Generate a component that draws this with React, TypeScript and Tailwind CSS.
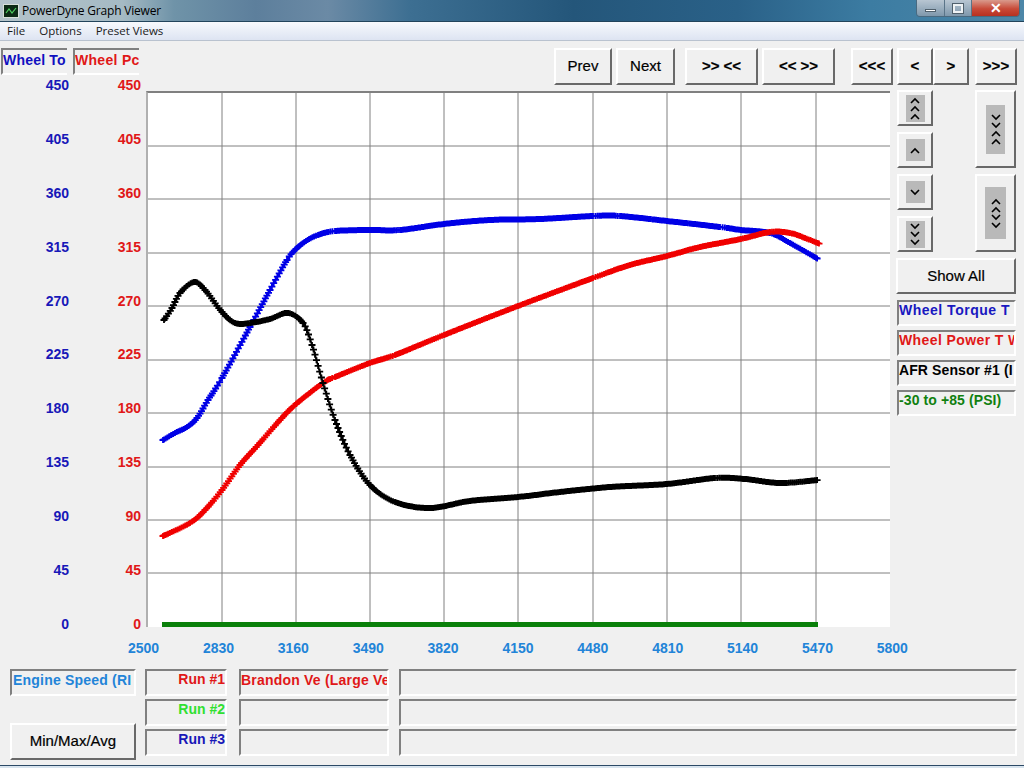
import { ReactNode } from "react";

const FONT = "font-['Liberation_Sans',Arial,sans-serif]";
const BTN =
  "flex shrink-0 items-center justify-center border-2 border-t-white border-l-white border-r-[#696969] border-b-[#696969] bg-[#f0f0f0] text-[15px] text-black [-webkit-text-stroke:0.2px_#000]";
const SUNKEN =
  "overflow-hidden whitespace-nowrap border-2 border-t-[#808080] border-l-[#808080] border-r-white border-b-white bg-[#f0f0f0] text-[14px] font-bold";

const V_LINES = [76, 150, 224, 298, 372, 447, 521, 595, 670];
const H_LINES = [55, 108, 162, 215, 269, 322, 376, 429, 482];
const Y_LABELS = [450, 405, 360, 315, 270, 225, 180, 135, 90, 45, 0];
const X_LABELS = [2500, 2830, 3160, 3490, 3820, 4150, 4480, 4810, 5140, 5470, 5800];

// traced from the picture, in page coordinates
const BLUE: [number, number][] = [
  [163, 440], [175, 433], [187, 427], [197, 418], [208, 400], [222, 378], [250, 327], [270, 290], [287, 260],
  [296, 249], [306, 241], [318, 235], [335, 231], [370, 230], [400, 230], [444, 224], [490, 220], [540, 219],
  [593, 216], [620, 216], [667, 221], [720, 227], [741, 230], [770, 233], [790, 243], [818, 259],
];
const RED: [number, number][] = [
  [163, 536], [190, 523], [205, 510], [222, 490], [240, 465], [258, 445], [280, 420], [296, 404],
  [323, 383], [335, 377], [370, 363], [395, 355], [444, 335], [518, 306], [593, 278], [630, 265],
  [667, 256], [700, 247], [741, 239], [770, 232], [790, 233], [805, 238], [820, 244],
];
const BLACK: [number, number][] = [
  [164, 320], [172, 308], [180, 293], [194, 282], [205, 290], [222, 312], [235, 323], [250, 323],
  [270, 319], [288, 313], [303, 323], [312, 345], [323, 383], [335, 420], [350, 455], [370, 485],
  [395, 502], [430, 508], [470, 501], [518, 497], [560, 492], [610, 487], [667, 484], [715, 478],
  [745, 479], [780, 483], [818, 480],
];

function markers(pts: [number, number][]) {
  let d = "";
  let line = "";
  for (let i = 0; i < pts.length - 1; i++) {
    const p0 = pts[Math.max(i - 1, 0)];
    const p1 = pts[i];
    const p2 = pts[i + 1];
    const p3 = pts[Math.min(i + 2, pts.length - 1)];
    const steps = Math.max(1, Math.round((p2[0] - p1[0]) / 1.65));
    for (let s = 0; s < steps; s++) {
      const t = s / steps;
      const at = (a: number, b: number, c: number, e: number) =>
        0.5 * (2 * b + (c - a) * t + (2 * a - 5 * b + 4 * c - e) * t * t + (3 * b - a - 3 * c + e) * t * t * t);
      const x = at(p0[0], p1[0], p2[0], p3[0]);
      const y = at(p0[1], p1[1], p2[1], p3[1]);
      d += `M${(x - 3.5).toFixed(1)} ${y.toFixed(1)}h7M${x.toFixed(1)} ${(y - 3).toFixed(1)}v6`;
      line += `${line ? "L" : "M"}${x.toFixed(1)} ${y.toFixed(1)}`;
    }
  }
  return d + line;
}

function Chart() {
  return (
    <svg viewBox="148 93 742 534" className="block h-[534px] w-[742px]">
      {V_LINES.map((x) => (
        <line key={x} x1={x + 146} x2={x + 146} y1={93} y2={627} stroke="#808080" strokeWidth="1" />
      ))}
      {H_LINES.map((y) => (
        <line key={y} x1={148} x2={890} y1={y + 91} y2={y + 91} stroke="#808080" strokeWidth="1" />
      ))}
      <path d="M162 624.5H818" stroke="#0a800a" strokeWidth="5" />
      <path d={markers(BLUE)} stroke="#0000e6" strokeWidth="1.8" fill="none" />
      <path d={markers(RED)} stroke="#f00000" strokeWidth="1.8" fill="none" />
      <path d={markers(BLACK)} stroke="#000" strokeWidth="1.8" fill="none" />
    </svg>
  );
}

function Chevrons({ dirs }: { dirs: ("u" | "d")[] }) {
  return (
    <span className="flex flex-col items-center gap-[1px]">
      {dirs.map((dir, i) => (
        <svg key={i} width="10" height="7" viewBox="0 0 10 7">
          <path d={dir === "u" ? "M1 6L5 2L9 6" : "M1 1L5 5L9 1"} fill="none" stroke="#000" strokeWidth="1.6" />
        </svg>
      ))}
    </span>
  );
}

function SideBtn({ dirs, className, pad }: { dirs: ("u" | "d")[]; className: string; pad: string }) {
  return (
    <div className={`${BTN} ${className}`}>
      <div className={`flex items-center justify-center bg-[#b9b9b9] ${pad}`}>
        <Chevrons dirs={dirs} />
      </div>
    </div>
  );
}

function ToolBtn({ className, children }: { className: string; children: ReactNode }) {
  return <div className={`${BTN} h-[37px] ${className}`}>{children}</div>;
}

function YAxis({ color, width }: { color: string; width: string }) {
  return (
    <div className={`flex h-[553px] flex-col items-end justify-between text-[14px] leading-[14px] font-bold ${color} ${width}`}>
      {Y_LABELS.map((v) => (
        <span key={v}>{v}</span>
      ))}
    </div>
  );
}

export default function App() {
  return (
    <div className={`flex h-[768px] w-[1024px] flex-col overflow-hidden bg-[#f0f0f0] ${FONT}`}>
      {/* title bar */}
      <div className="flex h-[22px] shrink-0 border-b border-b-[#22445c] bg-[linear-gradient(90deg,#b4c3ca_0%,#a5bac4_12%,#6f93a8_17%,#5d7f9c_25%,#6b8aa5_32%,#3d6f92_40%,#24567a_56%,#2a6188_72%,#3c7ca2_85%,#4d87a8_100%)]">
        <svg width="16" height="14" viewBox="0 0 16 14" className="mt-[4px] ml-[3px]">
          <rect x="0.5" y="0.5" width="15" height="13" fill="#0c2a14" stroke="#d8e0d8" />
          <path d="M3 9L6 5L9 9L13 4" stroke="#4fd05f" strokeWidth="1.2" fill="none" />
        </svg>
        <span className="ml-[3px] pt-[3px] font-['Open_Sans',sans-serif] text-[12px] leading-[16px] tracking-[-0.2px] text-black">
          PowerDyne Graph Viewer
        </span>
        <div className="mr-[4px] ml-auto flex h-[17px] overflow-hidden rounded-b-[4px] border border-t-0 border-[#4a6a80]">
          <div className="flex w-[27px] items-center justify-center bg-[linear-gradient(#b8c6d2,#7f98ac)]">
            <div className="mt-[4px] h-[3px] w-[11px] border border-[#50606c] bg-white" />
          </div>
          <div className="flex w-[28px] items-center justify-center border-x border-[#5a7488] bg-[linear-gradient(#b8c6d2,#7f98ac)]">
            <div className="h-[9px] w-[10px] border-2 border-[#eef2f4] outline outline-[#50606c]" />
          </div>
          <div className="flex w-[47px] items-center justify-center bg-[linear-gradient(#d99a8c,#c84a38_55%,#b83020)] text-[14px] leading-none font-bold text-white">
            ✕
          </div>
        </div>
      </div>

      {/* menu */}
      <div className="flex h-[19px] shrink-0 items-center gap-[14px] border-b border-b-[#b9c2cf] bg-[linear-gradient(#f7f9fd,#dde4f2)] pl-[7px] font-['Open_Sans',sans-serif] text-[11.5px] text-[#1a1a1a]">
        <span>File</span>
        <span>Options</span>
        <span>Preset Views</span>
      </div>

      {/* labels, toolbar, chart, side buttons */}
      <div className="flex shrink-0 pt-[7px]">
        <div className="flex w-[146px] shrink-0 flex-col">
          <div className="flex h-[27px] gap-[6px] pl-[1px]">
            <div className={`${SUNKEN} w-[66px] !border-r-0 leading-[20px] tracking-[0.2px] text-[#1010c0]`}>Wheel To</div>
            <div className={`${SUNKEN} w-[66px] !border-r-0 leading-[20px] tracking-[0.3px] text-[#e01818]`}>Wheel Pc</div>
          </div>
          <div className="flex pt-[3px]">
            <YAxis color="text-[#1818b8]" width="w-[69px]" />
            <YAxis color="text-[#e01818]" width="w-[72px]" />
          </div>
        </div>

        <div className="flex flex-col">
          <div className="flex h-[37px] pl-[408px]">
            <ToolBtn className="w-[58px]">Prev</ToolBtn>
            <ToolBtn className="ml-[4px] w-[59px]">Next</ToolBtn>
            <ToolBtn className="ml-[10px] w-[73px] text-[12px] font-bold">{">> <<"}</ToolBtn>
            <ToolBtn className="ml-[4px] w-[73px] text-[12px] font-bold">{"<< >>"}</ToolBtn>
            <ToolBtn className="ml-[16px] w-[42px] text-[12px] font-bold">{"<<<"}</ToolBtn>
            <ToolBtn className="ml-[4px] w-[36px] text-[12px] font-bold">{"<"}</ToolBtn>
            <ToolBtn className="w-[36px] text-[12px] font-bold">{">"}</ToolBtn>
            <ToolBtn className="ml-[6px] w-[42px] text-[12px] font-bold">{">>>"}</ToolBtn>
          </div>
          <div className="flex pt-[6px]">
            <div className="h-[536px] w-[744px] shrink-0 border-t-2 border-l-2 border-t-[#808080] border-l-[#b0b0b0] bg-white">
              <Chart />
            </div>
            <div className="-mt-[1px] flex w-[134px] shrink-0 flex-col pl-[6px]">
              <div className="flex h-[161px] justify-between pr-[8px] pl-[1px]">
                <div className="flex flex-col gap-[6px]">
                  <SideBtn dirs={["u", "u", "u"]} className="h-[36px] w-[36px]" pad="h-[27px] w-[19px]" />
                  <SideBtn dirs={["u"]} className="h-[36px] w-[36px]" pad="h-[22px] w-[19px]" />
                  <SideBtn dirs={["d"]} className="h-[36px] w-[36px]" pad="h-[22px] w-[19px]" />
                  <SideBtn dirs={["d", "d", "d"]} className="h-[36px] w-[36px]" pad="h-[27px] w-[19px]" />
                </div>
                <div className="flex flex-col gap-[6px]">
                  <SideBtn dirs={["d", "d", "u", "u"]} className="h-[78px] w-[41px]" pad="h-[49px] w-[19px]" />
                  <SideBtn dirs={["u", "u", "d", "d"]} className="h-[78px] w-[41px]" pad="h-[52px] w-[21px]" />
                </div>
              </div>
              <div className={`${BTN} mt-[7px] h-[36px] w-[120px]`}>Show All</div>
              <div className="mt-[6px] flex flex-col gap-[4px] pl-[1px]">
                <div className={`${SUNKEN} h-[26px] w-[119px] leading-[16px] tracking-[0.5px] text-[#1818c0]`}>Wheel Torque T W</div>
                <div className={`${SUNKEN} h-[26px] w-[119px] leading-[16px] tracking-[0.4px] text-[#e01818]`}>Wheel Power T W</div>
                <div className={`${SUNKEN} h-[26px] w-[119px] leading-[16px] tracking-[0.1px] text-black`}>AFR Sensor #1 (I</div>
                <div className={`${SUNKEN} h-[26px] w-[119px] leading-[16px] tracking-[0.1px] text-[#108010]`}>-30 to +85 (PSI)</div>
              </div>
            </div>
          </div>
        </div>
      </div>

      {/* x axis */}
      <div className="flex w-[908px] shrink-0 justify-between pt-[9px] pl-[128px] text-[14px] leading-[16px] font-bold text-[#2284d8]">
        {X_LABELS.map((v) => (
          <span key={v}>{v}</span>
        ))}
      </div>

      {/* run legend */}
      <div className="flex h-[104px] shrink-0 pt-[13px] pl-[10px]">
        <div className="flex h-[91px] w-[126px] shrink-0 flex-col justify-between">
          <div className={`${SUNKEN} h-[27px] pl-[1px] leading-[18px] tracking-[0.2px] text-[#2284d8]`}>Engine Speed (RI</div>
          <div className={`${BTN} h-[37px]`}>Min/Max/Avg</div>
        </div>
        <div className="ml-[9px] flex w-[82px] shrink-0 flex-col gap-[3px]">
          <div className={`${SUNKEN} h-[27px] text-right leading-[16px] text-[#e01818]`}>Run #1</div>
          <div className={`${SUNKEN} h-[27px] text-right leading-[16px] text-[#30e030]`}>Run #2</div>
          <div className={`${SUNKEN} h-[27px] text-right leading-[16px] text-[#1818b8]`}>Run #3</div>
        </div>
        <div className="ml-[12px] flex w-[150px] shrink-0 flex-col gap-[3px]">
          <div className={`${SUNKEN} h-[27px] leading-[18px] tracking-[0.2px] text-[#e01818]`}>Brandon Ve (Large Ve</div>
          <div className={`${SUNKEN} h-[27px]`} />
          <div className={`${SUNKEN} h-[27px]`} />
        </div>
        <div className="ml-[10px] flex w-[618px] shrink-0 flex-col gap-[3px]">
          <div className={`${SUNKEN} h-[27px]`} />
          <div className={`${SUNKEN} h-[27px]`} />
          <div className={`${SUNKEN} h-[27px]`} />
        </div>
      </div>

      <div className="mt-auto h-[3px] shrink-0 border-t border-t-[#2c4a66] bg-[#d8e4ee]" />
    </div>
  );
}
